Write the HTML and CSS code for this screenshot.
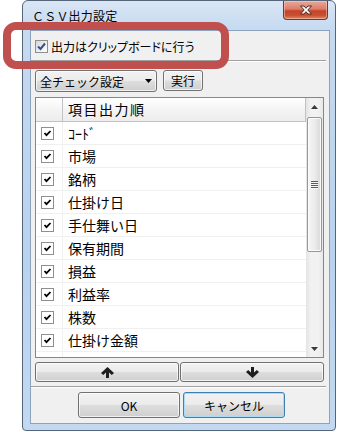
FILE: index.html
```html
<!DOCTYPE html>
<html lang="ja">
  <head>
    <meta charset="UTF-8" />
    <title>CSV出力設定</title>
    <link rel="stylesheet" href="styles.css">
  </head>
  <body>
    <div class="window">
      <div class="title-bar">
        <span class="title">ＣＳＶ出力設定</span>
        <button class="close-btn">
          <svg width="14" height="10" viewBox="0 0 14 10">
            <path d="M1.5 1 L5 1 L7 3.3 L9 1 L12.5 1 L8.8 5 L12.5 9 L9 9 L7 6.7 L5 9 L1.5 9 L5.2 5 Z" fill="#fff" stroke="#4a2a26" stroke-width="1" stroke-linejoin="round" />
          </svg>
        </button>
      </div>
      <div class="client">
        <label class="option-row">
          <span class="check themed">
            <svg width="11" height="11" viewBox="0 0 11 11"><path d="M2 5.5 L4.5 8 L9 2.5" fill="none" stroke="#33508f" stroke-width="2" /></svg>
          </span>
          <span class="option-text">出力はクリップボードに行う</span>
        </label>
        <div class="etched"></div>
        <div class="toolbar">
          <div class="combo">
            <span>全チェック設定</span>
            <svg class="combo-arrow" width="7" height="4" viewBox="0 0 7 4"><path d="M0 0 H7 L3.5 4 Z" fill="#000" /></svg>
          </div>
          <button class="btn run-btn">実行</button>
        </div>
        <div class="list">
          <div class="list-main">
            <div class="list-header">
              <div class="col-check"></div>
              <div class="col-name">項目出力順</div>
            </div>
            <div class="list-row"><div class="col-check"><span class="check"></span></div><div class="col-name">ｺｰﾄﾞ</div></div>
            <div class="list-row"><div class="col-check"><span class="check"></span></div><div class="col-name">市場</div></div>
            <div class="list-row"><div class="col-check"><span class="check"></span></div><div class="col-name">銘柄</div></div>
            <div class="list-row"><div class="col-check"><span class="check"></span></div><div class="col-name">仕掛け日</div></div>
            <div class="list-row"><div class="col-check"><span class="check"></span></div><div class="col-name">手仕舞い日</div></div>
            <div class="list-row"><div class="col-check"><span class="check"></span></div><div class="col-name">保有期間</div></div>
            <div class="list-row"><div class="col-check"><span class="check"></span></div><div class="col-name">損益</div></div>
            <div class="list-row"><div class="col-check"><span class="check"></span></div><div class="col-name">利益率</div></div>
            <div class="list-row"><div class="col-check"><span class="check"></span></div><div class="col-name">株数</div></div>
            <div class="list-row"><div class="col-check"><span class="check"></span></div><div class="col-name">仕掛け金額</div></div>
            <div class="list-row"><div class="col-check"></div><div class="col-name"></div></div>
          </div>
          <div class="scrollbar">
            <div class="scroll-btn">
              <svg width="7" height="4" viewBox="0 0 7 4"><path d="M0 4 H7 L3.5 0 Z" fill="#3a3a3a" /></svg>
            </div>
            <div class="scroll-thumb"><span class="grip"></span></div>
            <div class="scroll-track"></div>
            <div class="scroll-btn">
              <svg width="7" height="4" viewBox="0 0 7 4"><path d="M0 0 H7 L3.5 4 Z" fill="#3a3a3a" /></svg>
            </div>
          </div>
        </div>
        <div class="move-row">
          <button class="btn move-btn">
            <svg width="13" height="11" viewBox="0 0 13 11"><path d="M6.5 0 L13 6 L10.8 8 L8 5.4 L8 11 L5 11 L5 5.4 L2.2 8 L0 6 Z" fill="#1e1e1e" /></svg>
          </button>
          <button class="btn move-btn">
            <svg width="13" height="11" viewBox="0 0 13 11"><path d="M6.5 11 L13 5 L10.8 3 L8 5.6 L8 0 L5 0 L5 5.6 L2.2 3 L0 5 Z" fill="#1e1e1e" /></svg>
          </button>
        </div>
        <div class="etched"></div>
        <div class="dialog-buttons">
          <button class="btn dialog-btn">OK</button>
          <button class="btn dialog-btn default">キャンセル</button>
        </div>
      </div>
    </div>
    <div class="callout"></div>
  </body>
</html>
```

FILE: styles.css
```css
* {
  margin: 0;
  padding: 0;
  box-sizing: border-box;
}

body {
  width: 338px;
  height: 432px;
  overflow: hidden;
  position: relative;
  background-color: #fff;
  font-family: "Noto Sans CJK JP", "Liberation Sans", sans-serif;
  font-size: 12px;
  color: #000;
}

.window {
  width: 314px;
  height: 431px;
  margin-left: 22px;
  border: 1px solid #55657a;
  border-radius: 6px 6px 4px 4px;
  background: linear-gradient(180deg, #d9e6f5 0, #c6daf0 28px, #b9d2ee 60%, #c3d9f1 100%);
  padding: 0 5px 6px 7px;
  display: flex;
  flex-direction: column;
}

.title-bar {
  height: 29px;
  display: flex;
  align-items: flex-start;
}

.title {
  line-height: 29px;
  padding-left: 2px;
  letter-spacing: 0.2px;
}

.close-btn {
  margin-left: auto;
  margin-right: 2px;
  width: 45px;
  height: 19px;
  border: 1px solid #6d3a33;
  border-top: none;
  border-radius: 0 0 4px 4px;
  background: linear-gradient(180deg, #e9a99a 0%, #dc7d68 45%, #c4432a 55%, #c9502f 80%, #de8a66 100%);
  box-shadow: inset 0 0 0 1px rgba(255, 220, 210, 0.45);
  display: flex;
  align-items: center;
  justify-content: center;
}

.client {
  flex: 1;
  background-color: #f0f0f0;
  border: 1px solid #8ca3bf;
  padding: 5px 5px 5px 4px;
  display: flex;
  flex-direction: column;
  align-items: flex-start;
}

.option-row {
  height: 20px;
  display: flex;
  align-items: center;
}

.check {
  width: 13px;
  height: 13px;
  border: 1px solid #8e8f8f;
  background: #fff url("data:image/svg+xml;utf8,<svg xmlns='http://www.w3.org/2000/svg' width='11' height='11'><path d='M2.5 5 L4.5 7.2 L8.5 3' fill='none' stroke='black' stroke-width='1.8'/></svg>") no-repeat center;
  display: inline-block;
}

.check.themed {
  background: linear-gradient(135deg, #d6d6d6, #f4f4f4 70%, #fff);
  display: flex;
  align-items: center;
  justify-content: center;
}

.option-text {
  margin-left: 3px;
  font-feature-settings: "palt";
}

.etched {
  width: 295px;
  margin-left: -4px;
  margin-top: 4px;
  height: 2px;
  border-top: 1px solid #a0a0a0;
  border-bottom: 1px solid #fff;
}

.toolbar {
  margin-top: 8px;
  display: flex;
  gap: 6px;
  align-items: flex-start;
}

.btn {
  font: inherit;
  color: #000;
  border: 1px solid #707070;
  border-radius: 3px;
  background: linear-gradient(180deg, #f2f2f2 0%, #ebebeb 48%, #dddddd 52%, #cfcfcf 100%);
  box-shadow: inset 0 0 0 1px rgba(255, 255, 255, 0.7);
}

.combo {
  width: 122px;
  height: 22px;
  border: 1px solid #707070;
  border-radius: 3px;
  background: linear-gradient(180deg, #f2f2f2 0%, #ebebeb 48%, #dddddd 52%, #cfcfcf 100%);
  box-shadow: inset 0 0 0 1px rgba(255, 255, 255, 0.7);
  display: flex;
  align-items: center;
  padding-left: 4px;
  padding-right: 4px;
}

.combo-arrow {
  margin-left: auto;
}

.run-btn {
  width: 40px;
  height: 21px;
}

.list {
  margin-top: 5px;
  width: 289px;
  height: 261px;
  border: 1px solid #828790;
  background-color: #fff;
  display: flex;
  overflow: hidden;
}

.list-main {
  width: 270px;
  overflow: hidden;
}

.list-header,
.list-row {
  display: flex;
}

.list-header {
  height: 24px;
  background: linear-gradient(180deg, #ffffff 0%, #f4f4f4 50%, #ececec 100%);
}

.list-header .col-check,
.list-header .col-name {
  border-right: 1px solid #bfc2c7;
  border-bottom: 1px solid #bfc2c7;
}

.list-header .col-name {
  font-size: 14px;
  letter-spacing: 1.5px;
  line-height: 23px;
}

.col-check {
  width: 27px;
  flex-shrink: 0;
  padding-left: 5px;
}

.col-name {
  flex: 1;
  padding-left: 5px;
}

.list-row {
  height: 23px;
  border-bottom: 1px solid #f0f0f0;
}

.list-row .col-check {
  border-right: 1px solid #f0f0f0;
  display: flex;
  align-items: center;
}

.list-row .col-name {
  font-size: 14px;
  line-height: 22px;
}

.scrollbar {
  width: 17px;
  background: linear-gradient(90deg, #e4e4e4, #f2f2f2 30%, #f2f2f2 70%, #e8e8e8);
  display: flex;
  flex-direction: column;
}

.scroll-btn {
  height: 17px;
  display: flex;
  align-items: center;
  justify-content: center;
}

.scroll-thumb {
  margin: 2px 1px 0;
  height: 135px;
  border: 1px solid #979797;
  border-radius: 2px;
  background: linear-gradient(90deg, #f6f6f6 0%, #ececec 50%, #d8d8d8 100%);
  box-shadow: inset 0 0 0 1px rgba(255, 255, 255, 0.8);
  display: flex;
  align-items: center;
  justify-content: center;
}

.grip {
  width: 7px;
  height: 8px;
  background: repeating-linear-gradient(180deg, #5a5a5a 0 1px, #f8f8f8 1px 2px);
}

.scroll-track {
  flex: 1;
}

.move-row {
  margin-top: 4px;
  width: 289px;
  display: flex;
  gap: 1px;
}

.move-btn {
  flex: 1;
  height: 20px;
  display: flex;
  align-items: center;
  justify-content: center;
}

.dialog-buttons {
  margin-top: 4px;
  margin-left: 43px;
  display: flex;
  gap: 3px;
}

.dialog-btn {
  width: 102px;
  height: 26px;
}

.dialog-btn.default {
  border-color: #3c7fb1;
  box-shadow: inset 0 0 0 1px #a9dcf7;
}

.callout {
  position: absolute;
  left: 3px;
  top: 22px;
  width: 226px;
  height: 47px;
  border: 8px solid #c0504d;
  border-radius: 13px;
}
```
